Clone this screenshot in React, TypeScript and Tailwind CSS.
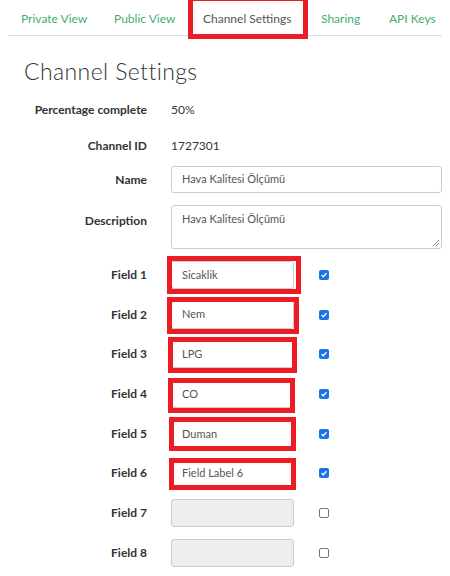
import React from "react";

const tabs = [
  { label: "Private View", active: false, cls: "w-[92px] pl-[13px]" },
  { label: "Public View", active: false, cls: "w-[88px] pl-[14px]" },
  { label: "Channel Settings", active: true, cls: "w-[120px] pl-[15px]" },
  { label: "Sharing", active: false, cls: "w-[67px] pl-[13px]" },
  { label: "API Keys", active: false, cls: "w-[64px] pl-[14px]" },
];

const fields = [
  { n: 1, value: "Sicaklik", on: true, box: "-left-[4px] -right-[7px] -top-[5px] -bottom-[5px]" },
  { n: 2, value: "Nem", on: true, box: "-left-[4px] -right-[5px] -top-[4px] -bottom-[5px]" },
  { n: 3, value: "LPG", on: true, box: "-left-[3px] -right-[3px] -top-[3px] -bottom-[5px]" },
  { n: 4, value: "CO", on: true, box: "-left-[3px] -right-[1px] -top-[2px] -bottom-[5px]" },
  { n: 5, value: "Duman", on: true, box: "-left-[2px] -right-[2px] -top-[3px] -bottom-[3px]" },
  { n: 6, value: "Field Label 6", on: true, box: "-left-[2px] -right-[2px] -top-[1px] -bottom-[3px]" },
  { n: 7, value: "", on: false, box: "" },
  { n: 8, value: "", on: false, box: "" },
];

function Check({ on }: { on: boolean }) {
  if (!on) {
    return <span className="block h-[10px] w-[10px] rounded-[2px] border border-[#767676] bg-white" />;
  }
  return (
    <span className="flex h-[10px] w-[10px] items-center justify-center rounded-[2px] bg-[#1a73e8]">
      <svg viewBox="0 0 10 10" className="h-[8px] w-[8px]">
        <path d="M2 5.2 L4.1 7.2 L8 2.8" fill="none" stroke="white" strokeWidth="1.7" />
      </svg>
    </span>
  );
}

export default function App() {
  return (
    <div className="h-[576px] w-[450px] overflow-hidden bg-white px-2 font-['Lato',sans-serif] text-[#333]">
      <ul className="flex h-[36px] items-center whitespace-nowrap border-b border-[#ddd] pt-[3px] text-[12px]">
        {tabs.map((t) => (
          <li key={t.label} className={"relative shrink-0 " + t.cls}>
            <span className={t.active ? "text-[#555]" : "text-[#3fae74]"}>{t.label}</span>
            {t.active && (
              <span className="absolute -bottom-[11px] -top-[14px] left-0 right-0 border-[5px] border-[#ec1c24]" />
            )}
          </li>
        ))}
      </ul>

      <h1 className="mt-[21px] pl-4 font-['Lato',sans-serif] text-[23px] font-light leading-[28px] tracking-[0.4px] text-[#333]">
        Channel Settings
      </h1>

      <div className="mt-[15px] flex flex-col text-[12px]">
        <div className="flex h-[20px] items-center">
          <div className="w-[139px] text-right font-bold">Percentage complete</div>
          <div className="ml-6">50%</div>
        </div>
        <div className="mt-[16px] flex h-[20px] items-center">
          <div className="w-[139px] text-right font-bold">Channel ID</div>
          <div className="ml-6">1727301</div>
        </div>
        <div className="mt-[10px] flex items-center">
          <div className="w-[139px] text-right font-bold">Name</div>
          <div className="ml-6 flex h-[27px] w-[271px] items-center rounded-[3px] border border-[#ccc] px-[10px] text-[11px] text-[#555]">
            Hava Kalitesi Ölçümü
          </div>
        </div>
        <div className="mt-[12px] flex items-start">
          <div className="w-[139px] pt-[7px] text-right font-bold">Description</div>
          <div className="relative ml-6 h-[44px] w-[271px] rounded-[3px] border border-[#ccc] px-[10px] pt-[5px] text-[11px] text-[#555]">
            Hava Kalitesi Ölçümü
            <svg viewBox="0 0 8 8" className="absolute bottom-[1px] right-[1px] h-[8px] w-[8px]">
              <path d="M1 7 L7 1 M4 7 L7 4" stroke="#777" strokeWidth="0.8" />
            </svg>
          </div>
        </div>

        <div className="mt-[12px] flex flex-col gap-[11.7px]">
          {fields.map((f) => (
            <div key={f.n} className="flex h-[28px] items-center">
              <div className="w-[139px] text-right font-bold">Field {f.n}</div>
              <div className="relative ml-6">
                <div
                  className={
                    "flex h-[28px] w-[123px] items-center rounded-[3px] border border-[#ccc] px-[10px] text-[11px] text-[#555] " +
                    (f.value ? "bg-white" : "bg-[#eee]")
                  }
                >
                  {f.value}
                </div>
                {f.box && <span className={"absolute border-[5px] border-[#ec1c24] " + f.box} />}
              </div>
              <div className="ml-[25px]">
                <Check on={f.on} />
              </div>
            </div>
          ))}
        </div>
      </div>
    </div>
  );
}
